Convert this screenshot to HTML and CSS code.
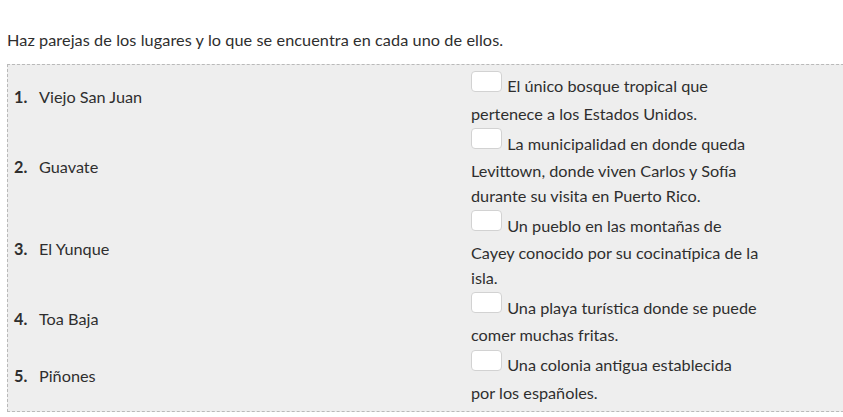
FILE: index.html
```html
<!DOCTYPE html>
<html lang="es">
<head>
<meta charset="utf-8">
<title>Haz parejas</title>
<link rel="stylesheet" href="styles.css">
</head>
<body>
<div class="page">
  <p class="prompt">Haz parejas de los lugares y lo que se encuentra en cada uno de ellos.</p>
  <div class="board">
    <table class="match">
      <tr>
        <td class="place"><span class="num">1.</span>Viejo San Juan</td>
        <td class="desc"><span class="slot"></span> El único bosque tropical que<br>pertenece a los Estados Unidos.</td>
      </tr>
      <tr>
        <td class="place"><span class="num">2.</span>Guavate</td>
        <td class="desc"><span class="slot"></span> La municipalidad en donde queda<br>Levittown, donde viven Carlos y Sofía<br>durante su visita en Puerto Rico.</td>
      </tr>
      <tr>
        <td class="place"><span class="num">3.</span>El Yunque</td>
        <td class="desc"><span class="slot"></span> Un pueblo en las montañas de<br>Cayey conocido por su cocinatípica de la<br>isla.</td>
      </tr>
      <tr>
        <td class="place"><span class="num">4.</span>Toa Baja</td>
        <td class="desc"><span class="slot"></span> Una playa turística donde se puede<br>comer muchas fritas.</td>
      </tr>
      <tr>
        <td class="place"><span class="num">5.</span>Piñones</td>
        <td class="desc"><span class="slot"></span> Una colonia antigua establecida<br>por los españoles.</td>
      </tr>
    </table>
  </div>
</div>
</body>
</html>
```
FILE: styles.css
```css
html, body {
  margin: 0;
  padding: 0;
  background: #fff;
  overflow: hidden;
}
.page {
  padding: 28px 0 0 7px;
  font-family: Lato, "Liberation Sans", sans-serif;
  font-size: 16.25px;
  line-height: 24.5px;
  color: #2e2e2e;
}
.prompt {
  margin: 0 0 11px;
  letter-spacing: 0.07px;
}
.board {
  width: 912px;
  box-sizing: border-box;
  padding: 4.25px 0 5.75px;
  background: #eeeeee;
  border: 1px dashed #b9b9b9;
}
.match {
  width: 100%;
  table-layout: fixed;
  border-collapse: collapse;
}
.match td {
  padding: 0.25px 0 0.25px 7px;
  vertical-align: middle;
}
.place {
  width: 456px;
  box-sizing: border-box;
}
.num {
  display: inline-block;
  width: 24px;
  margin-left: -1px;
  margin-right: 1px;
  font-weight: 700;
}
.slot {
  display: inline-block;
  box-sizing: border-box;
  width: 31px;
  height: 21px;
  border: 1px solid #d2d2d2;
  border-radius: 4px;
  background: #fff;
  margin: 1.5px 1px 10px 0;
  vertical-align: -10px;
}
```
